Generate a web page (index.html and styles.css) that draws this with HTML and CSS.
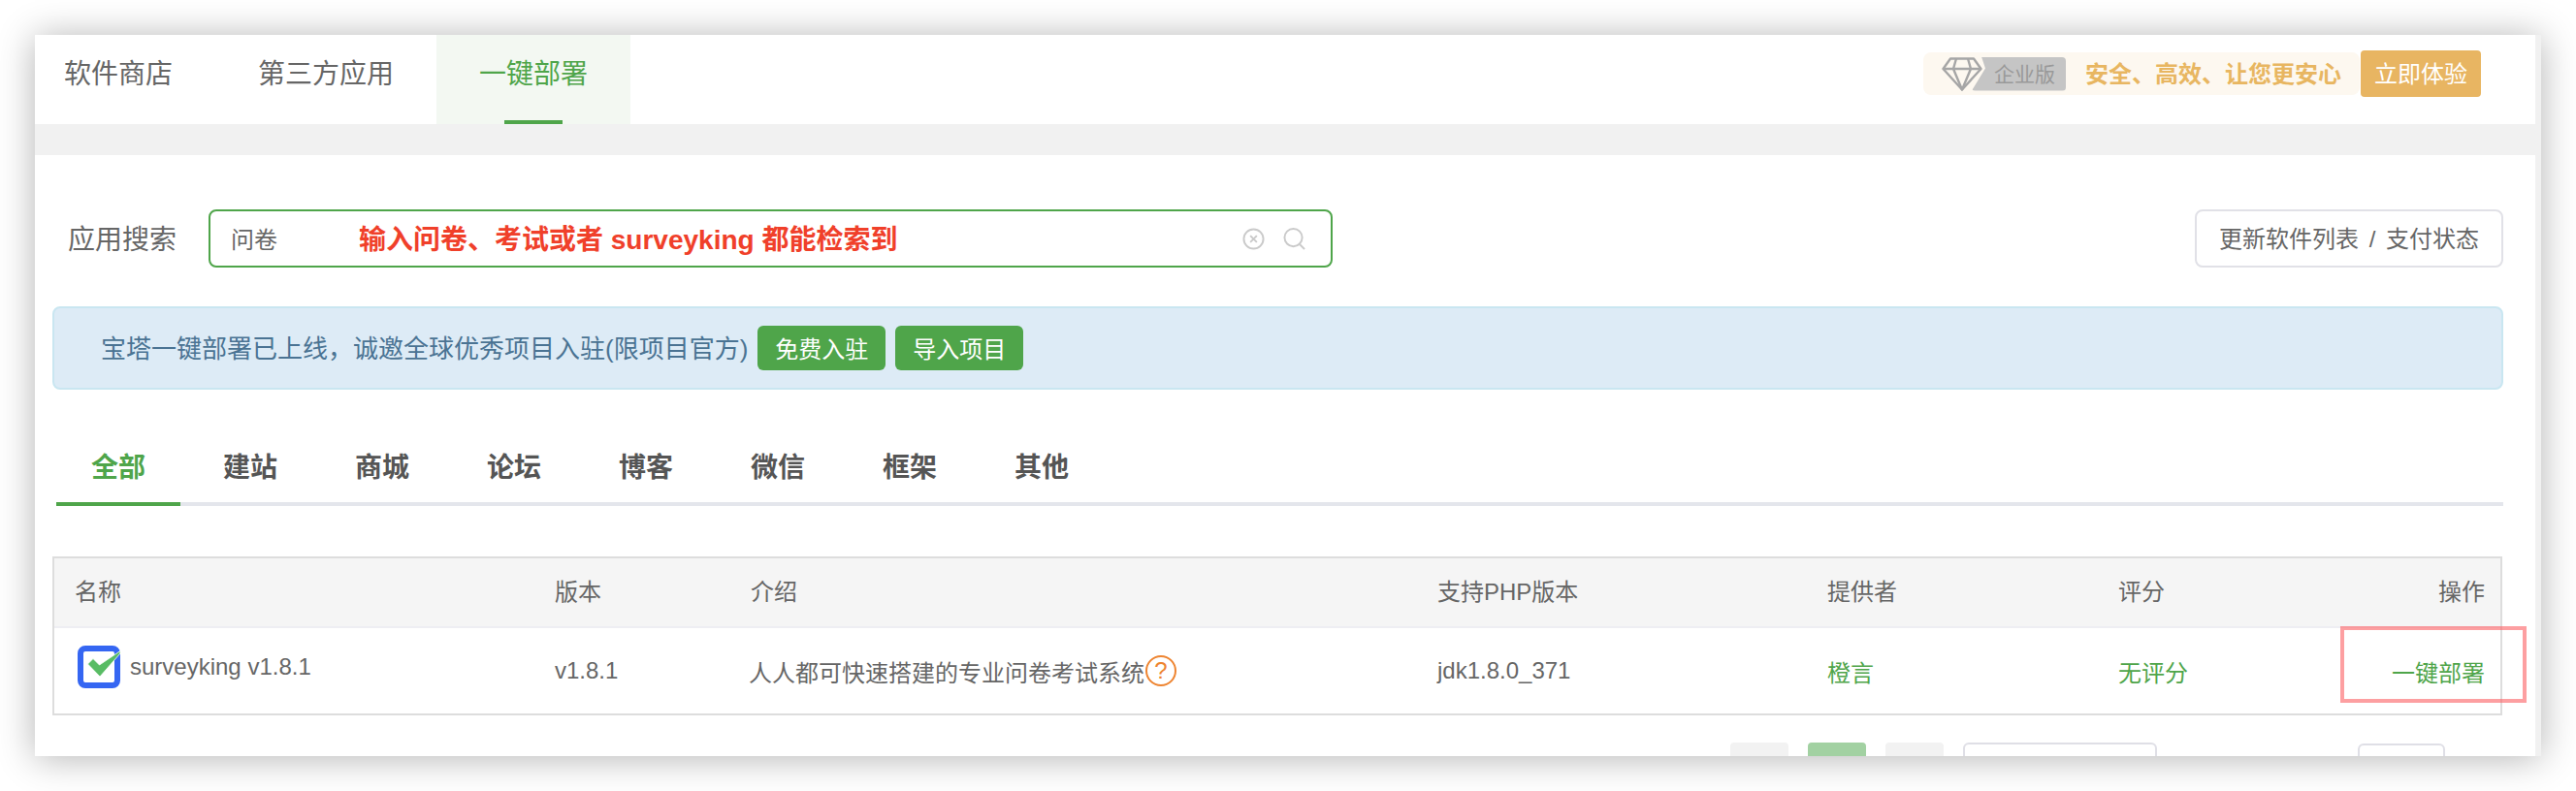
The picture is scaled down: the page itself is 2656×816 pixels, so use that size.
FILE: index.html
```html
<!DOCTYPE html>
<html lang="zh-CN">
<head>
  <meta charset="UTF-8" />
  <title>软件商店</title>
  <link rel="stylesheet" href="styles.css">
</head>
<body>
  <div class="window">
    <div class="main">
      <header class="topbar">
        <nav class="tabs">
          <a class="tab">软件商店</a>
          <a class="tab">第三方应用</a>
          <a class="tab active">一键部署</a>
        </nav>
        <div class="promo">
          <div class="promo-box">
            <svg class="gem" viewBox="0 0 42 35" fill="none" stroke="#a6a6a6" stroke-width="2.4" stroke-linejoin="round">
              <path d="M9 1.5H33L40.5 12L21 33.5L1.5 12Z" />
              <path d="M1.5 12H40.5M15 1.5L12 12L21 33.5L30 12L27 1.5" />
            </svg>
            <span class="edition">企业版</span>
            <span class="slogan">安全、高效、让您更安心</span>
          </div>
          <button class="try">立即体验</button>
        </div>
      </header>
      <div class="gap"></div>
      <section class="content">
        <div class="search-row">
          <label class="search-label">应用搜索</label>
          <div class="search">
            <input class="search-input" type="text" value="问卷" />
            <span class="note">输入问卷、考试或者 surveyking 都能检索到</span>
            <svg class="search-icon" viewBox="0 0 24 24" fill="none" stroke="#cacaca" stroke-width="2">
              <circle cx="12" cy="12" r="10.5" />
              <path d="M8.5 8.5L15.5 15.5M15.5 8.5L8.5 15.5" />
            </svg>
            <svg class="search-icon" viewBox="0 0 24 24" fill="none" stroke="#cacaca" stroke-width="2">
              <circle cx="11" cy="10.5" r="9.5" />
              <path d="M18 18L23 23" />
            </svg>
          </div>
          <button class="refresh">更新软件列表 / 支付状态</button>
        </div>
        <div class="alert">
          <span class="alert-text">宝塔一键部署已上线&#65292;诚邀全球优秀项目入驻(限项目官方)</span>
          <button class="btn-green">免费入驻</button>
          <button class="btn-green">导入项目</button>
        </div>
        <nav class="cats">
          <a class="cat active">全部</a>
          <a class="cat">建站</a>
          <a class="cat">商城</a>
          <a class="cat">论坛</a>
          <a class="cat">博客</a>
          <a class="cat">微信</a>
          <a class="cat">框架</a>
          <a class="cat">其他</a>
        </nav>
        <div class="table-wrap">
          <table class="soft-table">
            <colgroup>
              <col class="c-name" /><col class="c-ver" /><col class="c-desc" />
              <col class="c-php" /><col class="c-by" /><col class="c-score" /><col class="c-op" />
            </colgroup>
            <thead>
              <tr>
                <th>名称</th>
                <th>版本</th>
                <th>介绍</th>
                <th>支持PHP版本</th>
                <th>提供者</th>
                <th>评分</th>
                <th class="right">操作</th>
              </tr>
            </thead>
            <tbody>
              <tr>
                <td>
                  <div class="app-name">
                    <svg class="app-icon" viewBox="0 0 44 44">
                      <rect x="3" y="3" width="38" height="38" rx="5" fill="#fff" stroke="#3566f2" stroke-width="6" />
                      <path d="M10.5 19L16 13.5L22.5 20L44 5.5V8L23 32Z" fill="#58bc64" stroke="#fff" stroke-width="0.8" />
                    </svg>
                    <span>surveyking v1.8.1</span>
                  </div>
                </td>
                <td>v1.8.1</td>
                <td>
                  <div class="desc">人人都可快速搭建的专业问卷考试系统<span class="help">?</span></div>
                </td>
                <td>jdk1.8.0_371</td>
                <td class="link">橙言</td>
                <td class="link">无评分</td>
                <td class="link right">一键部署</td>
              </tr>
            </tbody>
          </table>
          <div class="mark"></div>
        </div>
        <div class="pager">
          <span class="page"></span>
          <span class="page current"></span>
          <span class="page"></span>
          <span class="page-size"></span>
          <span class="page-go"></span>
        </div>
      </section>
    </div>
    <div class="strip"></div>
  </div>
</body>
</html>
```

FILE: styles.css
```css
* {
  box-sizing: border-box;
}
html, body {
  margin: 0;
  height: 816px;
  overflow: hidden;
  background: #fff;
}
body {
  padding: 36px;
  font-family: "Liberation Sans", "Noto Sans CJK SC", sans-serif;
  color: #666;
}
button {
  font-family: inherit;
  cursor: pointer;
}
.window {
  width: 2584px;
  height: 744px;
  display: flex;
  overflow: hidden;
  background: #fff;
  box-shadow: 0 2px 36px rgba(0, 0, 0, 0.3);
}
.main {
  flex: 1;
  min-width: 0;
}
.strip {
  width: 6px;
  background: #f1f1f1;
}
.topbar {
  height: 92px;
  display: flex;
  justify-content: space-between;
  padding-right: 56px;
  background: #fff;
  border-bottom-right-radius: 8px;
}
.tabs {
  display: flex;
}
.tab {
  height: 92px;
  padding: 0 44px;
  line-height: 82px;
  font-size: 28px;
  color: #666;
  position: relative;
}
.tab:first-child {
  padding-left: 30px;
}
.tab.active {
  width: 200px;
  background: #f3f8f2;
  color: #4fa54a;
}
.tab.active::after {
  content: "";
  position: absolute;
  left: 70px;
  bottom: 0;
  width: 60px;
  height: 4px;
  background: #4fa54a;
}
.promo {
  display: flex;
  align-items: center;
  gap: 1px;
  height: 48px;
  margin-top: 16px;
}
.promo-box {
  display: flex;
  align-items: center;
  width: 450px;
  height: 44px;
  padding-left: 19px;
  background: #fdf8f0;
  border-radius: 8px;
}
.gem {
  width: 42px;
  height: 35px;
  margin-right: -11px;
  position: relative;
}
.edition {
  width: 97px;
  height: 35px;
  padding-left: 23px;
  line-height: 35px;
  font-size: 21px;
  color: #999;
  background: #c5c5c5;
  border-radius: 4px;
  clip-path: polygon(10px 0, 100% 0, 100% 100%, 0 100%, 14px 12px);
}
.slogan {
  margin-left: 20px;
  padding-bottom: 4px;
  font-size: 24px;
  font-weight: 700;
  color: #e8b661;
  white-space: nowrap;
}
.try {
  width: 124px;
  height: 48px;
  padding: 0 0 3px;
  border: none;
  border-radius: 4px;
  background: #e8b562;
  color: #fff;
  font-size: 24px;
}
.gap {
  height: 32px;
  background: #f1f1f1;
}
.content {
  padding: 56px 33px 0 18px;
}
.search-row {
  display: flex;
  align-items: center;
  height: 60px;
}
.search-label {
  width: 161px;
  padding: 0 0 2px 16px;
  font-size: 28px;
  color: #666;
}
.search {
  display: flex;
  align-items: center;
  width: 1159px;
  height: 60px;
  padding-right: 26px;
  border: 2px solid #4fa54a;
  border-radius: 8px;
}
.search-input {
  width: 153px;
  height: 50px;
  padding: 0 0 2px 21px;
  border: none;
  outline: none;
  background: none;
  font-family: inherit;
  font-size: 24px;
  color: #666;
}
.note {
  flex: 1;
  padding-bottom: 2px;
  font-size: 28px;
  font-weight: 700;
  color: #f0402a;
  white-space: nowrap;
}
.search-icon {
  width: 23px;
  height: 23px;
  margin-left: 19px;
}
.refresh {
  width: 318px;
  height: 60px;
  margin-left: auto;
  padding: 0 0 3px;
  border: 2px solid #e1e1e7;
  border-radius: 8px;
  background: #fff;
  color: #666;
  font-size: 24px;
  word-spacing: 4px;
}
.alert {
  display: flex;
  align-items: center;
  gap: 10px;
  height: 86px;
  margin-top: 40px;
  padding-left: 48px;
  border: 2px solid #c9e6f1;
  border-radius: 8px;
  background: #ddebf6;
  font-size: 26px;
  color: #4a7393;
}
.alert-text {
  padding-bottom: 3px;
}
.btn-green {
  width: 132px;
  height: 46px;
  padding: 0 0 2px;
  border: none;
  border-radius: 6px;
  background: #4fa54a;
  color: #fff;
  font-size: 24px;
}
.cats {
  display: flex;
  margin-top: 44px;
  margin-left: 4px;
  border-bottom: 4px solid #e4e6ec;
}
.cat {
  width: 128px;
  margin-right: 8px;
  margin-bottom: -4px;
  padding-top: 2px;
  line-height: 70px;
  text-align: center;
  font-size: 28px;
  font-weight: 700;
  color: #555;
  border-bottom: 4px solid transparent;
}
.cat.active {
  color: #4fa54a;
  border-bottom-color: #4fa54a;
}
.table-wrap {
  position: relative;
  width: 2526px;
  margin-top: 52px;
  border: 2px solid #ddd;
}
.soft-table {
  width: 100%;
  table-layout: fixed;
  border-collapse: collapse;
  font-size: 24px;
}
.c-name { width: 495px; }
.c-ver { width: 202px; }
.c-desc { width: 708px; }
.c-php { width: 402px; }
.c-by { width: 300px; }
.c-score { width: 230px; }
.c-op { width: 185px; }
.soft-table th {
  height: 71px;
  padding: 0 16px 5px 21px;
  background: #f5f5f5;
  border-bottom: 2px solid #eeeef3;
  text-align: left;
  font-weight: 400;
  color: #666;
}
.soft-table td {
  height: 89px;
  padding: 0 16px 0 21px;
  color: #666;
}
.soft-table .right {
  text-align: right;
}
.soft-table .link {
  color: #4fa54a;
}
.app-name {
  display: flex;
  align-items: center;
  gap: 10px;
  padding: 0 0 9px 3px;
}
.app-icon {
  width: 44px;
  height: 44px;
}
.desc {
  display: flex;
  align-items: center;
  margin-left: -2px;
}
.help {
  width: 32px;
  height: 32px;
  margin-left: 1px;
  border: 2px solid #ee8430;
  border-radius: 50%;
  line-height: 28px;
  text-align: center;
  color: #ee8430;
}
.mark {
  position: absolute;
  top: 70px;
  right: -27px;
  width: 192px;
  height: 79px;
  border: 4px solid rgba(251, 100, 104, 0.62);
}
.pager {
  display: flex;
  justify-content: flex-end;
  gap: 20px;
  margin-top: 28px;
  padding-right: 60px;
}
.page {
  width: 60px;
  height: 50px;
  border-radius: 4px;
  background: #f2f2f2;
}
.page.current {
  background: #a2d1a2;
}
.page-size {
  width: 200px;
  height: 50px;
  border: 2px solid #dfdfe6;
  border-radius: 6px;
}
.page-go {
  width: 90px;
  height: 50px;
  margin: 1px 0 0 187px;
  border: 2px solid #dfdfe6;
  border-radius: 6px;
}
```
